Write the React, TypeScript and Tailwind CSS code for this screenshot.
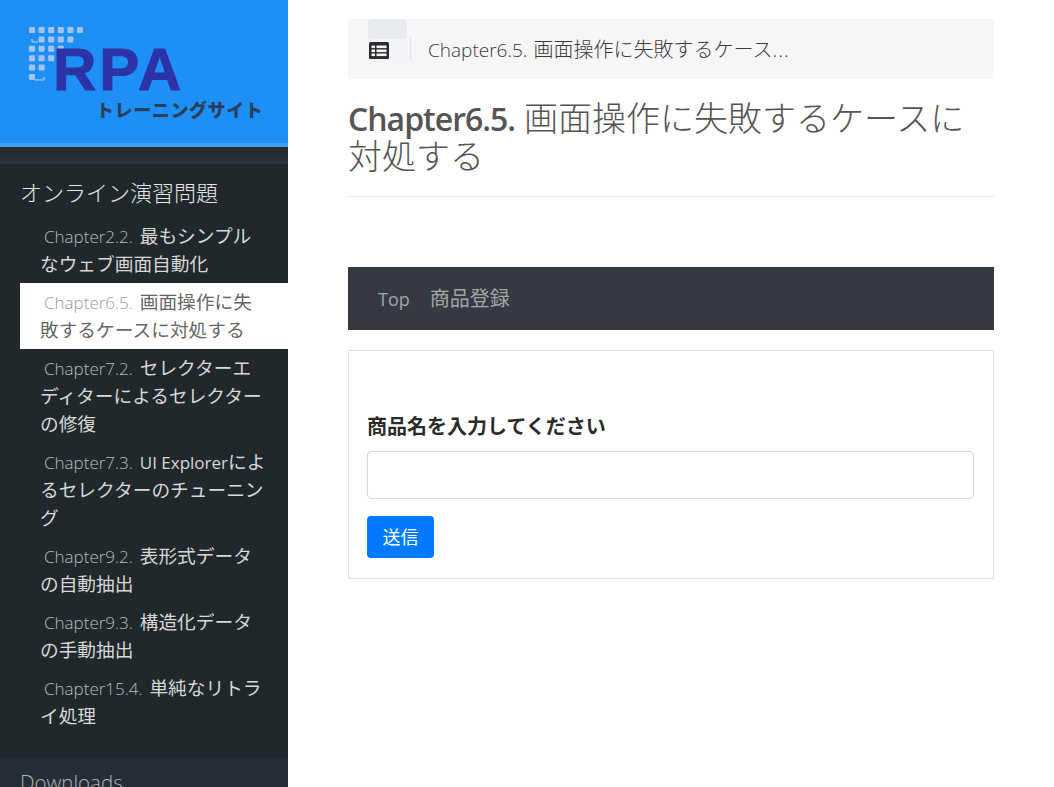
import type { ReactNode } from 'react';

const sans = "font-['Open_Sans','Noto_Sans_CJK_JP',sans-serif]";

// line breaks follow the reference, whose Latin glyphs are narrower than Open Sans
const chapters: { num: string; title: ReactNode; active?: boolean }[] = [
  { num: 'Chapter2.2.', title: '最もシンプル\nなウェブ画面自動化' },
  { num: 'Chapter6.5.', title: '画面操作に失\n敗するケースに対処する', active: true },
  { num: 'Chapter7.2.', title: 'セレクターエ\nディターによるセレクター\nの修復' },
  {
    num: 'Chapter7.3.',
    title: (
      <>
        <span className="text-[17px] leading-none">UI Explorer</span>によ{'\n'}るセレクターのチューニン{'\n'}グ
      </>
    ),
  },
  { num: 'Chapter9.2.', title: '表形式データ\nの自動抽出' },
  { num: 'Chapter9.3.', title: '構造化データ\nの手動抽出' },
  { num: 'Chapter15.4.', title: '単純なリトラ\nイ処理' },
];

function LogoDots() {
  const rows = [
    [0, 1, 2, 3, 4, 5],
    [1, 2, 3, 4],
    [0, 1, 2, 3],
    [0, 1, 2],
    [0, 1],
    [0],
  ];
  return (
    <svg width="60" height="60" viewBox="0 0 60 60" className="absolute left-[29px] top-[27px]">
      {rows.map((cols, row) =>
        cols.map((col) => (
          <rect key={`${row}-${col}`} x={col * 9.6} y={row * 9.4} width="6" height="6" rx="1" fill="#a5c3ea" />
        )),
      )}
      <path d="M3 12v3h6M6 53h9v-3" fill="none" stroke="#c3d6ee" strokeWidth="1" />
    </svg>
  );
}

function Logo() {
  return (
    <div className="relative h-[143px] shrink-0 bg-[#1e8ff5]">
      <LogoDots />
      <span className="absolute left-[53px] top-[35px] text-[60px] leading-[70px] font-bold tracking-[3px] text-[#2b33a6] [-webkit-text-stroke:1px_#2b33a6] font-['Liberation_Sans',sans-serif]">
        RPA
      </span>
      <span className="absolute left-[96px] top-[96px] text-[18px] leading-[26px] font-black tracking-[0.6px] text-[#2a3f5e] font-['Noto_Sans_CJK_JP',sans-serif]">
        トレーニングサイト
      </span>
    </div>
  );
}

function Sidebar() {
  return (
    <aside className="flex h-[787px] w-[288px] shrink-0 flex-col overflow-hidden bg-[#20282c]">
      <Logo />
      <div className="h-[4px] shrink-0 bg-[#3d9df5]" />
      <div className="h-[17px] shrink-0 bg-gradient-to-b from-[#24282b] to-[#2b343a]" />
      <div className="shrink-0 pt-[14px]">
        <h3 className="pl-[20px] text-[22px] leading-[28px] font-light text-[#e6e6e6]">オンライン演習問題</h3>
        <ul className="mt-[11px] pl-[20px]">
          {chapters.map((c) => (
            <li
              key={c.num}
              className={
                c.active
                  ? 'whitespace-pre bg-white py-[5px] pl-[20px] text-[18.7px] leading-[28px] text-[#666]'
                  : 'whitespace-pre py-[5px] pl-[20px] text-[18.7px] leading-[28px] text-[#d8d8d8]'
              }
            >
              <span
                className={
                  c.active
                    ? 'ml-[4px] mr-[2px] text-[17px] leading-none font-light text-[#999]'
                    : 'ml-[4px] mr-[2px] text-[17px] leading-none font-light text-[#bdbdbd]'
                }
              >
                {c.num}
              </span>{' '}
              {c.title}
            </li>
          ))}
        </ul>
      </div>
      <div className="mt-[23px] h-[60px] shrink-0 bg-[#252d36] pl-[20px] pt-[10px] text-[20.5px] leading-[28px] font-light text-[#b4b4b4]">
        Downloads
      </div>
    </aside>
  );
}

function TopBar() {
  return (
    <div className="relative flex h-[60px] items-center bg-[#f6f6f7]">
      <div className="absolute left-[20px] top-0 h-[44px] w-[39px] rounded-[4px] bg-[#f2f5f8]">
        <div className="h-[20px] rounded-[4px] bg-[#e6ebf0]" />
      </div>
      <svg viewBox="0 0 20 17" className="relative top-[1px] ml-[21px] h-[17px] w-[20px]">
        <rect width="20" height="17" rx="1.5" fill="#2b2b2b" />
        <rect x="2.5" y="3.5" width="3.5" height="2.6" fill="#f5f6f6" />
        <rect x="7.5" y="3.5" width="10" height="2.6" fill="#f5f6f6" />
        <rect x="2.5" y="7.5" width="3.5" height="2.6" fill="#f5f6f6" />
        <rect x="7.5" y="7.5" width="10" height="2.6" fill="#f5f6f6" />
        <rect x="2.5" y="11.5" width="3.5" height="2.6" fill="#f5f6f6" />
        <rect x="7.5" y="11.5" width="10" height="2.6" fill="#f5f6f6" />
      </svg>
      <div className="ml-[21px] h-[24px] w-px bg-[#e3e3e3]" />
      <span className="ml-[17px] pt-px text-[20px] font-light text-[#3a3a3a]">
        <span className="mr-px text-[19px] leading-none">Chapter6.5.</span> 画面操作に失敗するケース
        <span className="tracking-[1px]">...</span>
      </span>
    </div>
  );
}

export default function App() {
  return (
    <div className={`flex h-[787px] w-[1054px] overflow-hidden bg-white ${sans}`}>
      <Sidebar />
      <main className="ml-[60px] w-[646px] pt-[19px]">
        <TopBar />
        <h1 className="mt-[20px] border-b border-[#e8e8e8] pb-[21px] text-[34px] leading-[38px] font-light text-[#555]">
          <span className="text-[32px] leading-none font-semibold tracking-[-1px]">Chapter6.5.</span> 画面操作に失敗するケースに対処する
        </h1>
        <nav className="mt-[70px] flex h-[63px] items-center bg-[#343a40] pl-[30px] pt-px text-[20px] text-[#a3a5a8]">
          <span className="text-[18px] leading-none">Top</span>
          <span className="ml-[20px]">商品登録</span>
        </nav>
        <section className="mt-[20px] h-[229px] border border-[#e2e2e2] pl-[18px] pr-[19px] pt-[61px]">
          <label className="block text-[20px] leading-[30px] font-bold text-[#2b2b2b]">商品名を入力してください</label>
          <input className="mt-[9px] block h-[48px] w-full rounded-[4px] border border-[#d4d8dc]" />
          <button className="mt-[17px] h-[42px] w-[67px] rounded-[4px] bg-[#007bff] text-[18px] text-white">送信</button>
        </section>
      </main>
    </div>
  );
}
